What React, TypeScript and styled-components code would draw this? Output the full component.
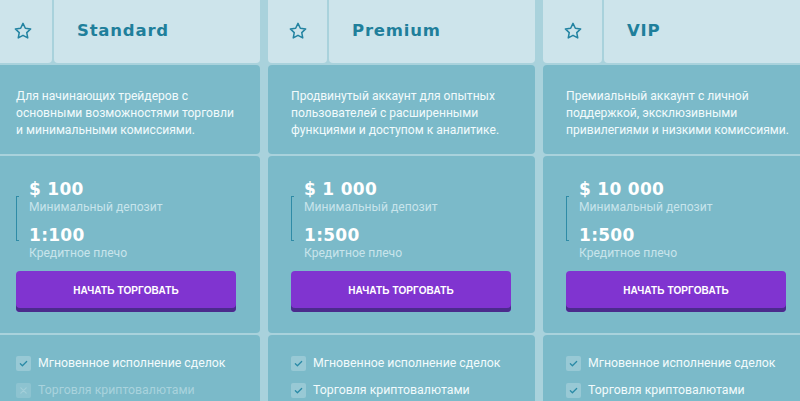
import React from "react";
import styled, { createGlobalStyle } from "styled-components";

const Global = createGlobalStyle`
  html, body { margin: 0; padding: 0; background: #a9d2dc; overflow: hidden; }
  body { font-family: "Roboto", "Liberation Sans", sans-serif; }
`;

const Row = styled.div`
  display: flex;
  align-items: flex-start;
  gap: 8px;
  margin-left: -7px;
  width: 830px;
  height: 401px;
  overflow: hidden;
`;

const Card = styled.div`
  flex: 0 0 267px;
  width: 267px;
  min-width: 0;
  display: flex;
  flex-direction: column;
  gap: 2px;
`;

const Header = styled.div`
  display: flex;
  gap: 2px;
  height: 66px;
  flex: 0 0 66px;
  margin-top: -3px;
`;

const HeadCell = styled.div<{ $grow?: boolean }>`
  background: #cde4eb;
  border-radius: 0 0 4px 4px;
  display: flex;
  align-items: center;
  ${(p) => (p.$grow ? "flex: 1; padding-left: 23px;" : "flex: 0 0 59px; justify-content: center;")}
  padding-top: 1px;
  box-sizing: border-box;
`;

const Title = styled.div`
  font-family: "DejaVu Sans", sans-serif;
  font-weight: 600;
  font-size: 16.5px;
  letter-spacing: 0.8px;
  color: #1f7f9b;
`;

const Section = styled.div<{ $h: number }>`
  background: #7bbac9;
  border-radius: 4px;
  height: ${(p) => p.$h}px;
  flex: 0 0 ${(p) => p.$h}px;
  box-sizing: border-box;
  padding: 0 23px;
`;

const Desc = styled.p`
  margin: 0;
  padding-top: 23px;
  font-size: 12.1px;
  line-height: 17px;
  color: #f2fafc;
  white-space: nowrap;
`;

const PriceBlock = styled.div`
  position: relative;
  margin-top: 23px;
  padding-left: 13px;
  &::before {
    content: "";
    position: absolute;
    left: 0;
    top: 17px;
    width: 3px;
    height: 45px;
    border: 1.5px solid #2f8ba6;
    border-right: none;
    box-sizing: border-box;
  }
`;

const Value = styled.div`
  font-family: "DejaVu Sans", sans-serif;
  font-weight: 700;
  font-size: 17px;
  line-height: 20px;
  color: #ffffff;
  letter-spacing: 0.3px;
`;

const Label = styled.div`
  font-size: 12.1px;
  line-height: 16px;
  color: #c8e4eb;
  margin-bottom: 10px;
  white-space: nowrap;
`;

const Button = styled.button`
  display: block;
  width: 220px;
  height: 41px;
  margin-top: 0;
  border: none;
  border-radius: 4px;
  background: #8034d0;
  box-shadow: inset 0 -4px 0 #4b2b8c;
  padding-bottom: 3px;
  color: #ffffff;
  font-family: "Liberation Sans", sans-serif;
  font-weight: 700;
  font-size: 10px;
  letter-spacing: 0.1px;
  cursor: pointer;
`;

const Features = styled.ul`
  list-style: none;
  margin: 0;
  padding: 20px 0 0;
  display: flex;
  flex-direction: column;
  gap: 11px;
`;

const Feature = styled.li<{ $off?: boolean }>`
  display: flex;
  align-items: center;
  gap: 7px;
  font-size: 12.3px;
  line-height: 16px;
  white-space: nowrap;
  color: ${(p) => (p.$off ? "#a9d3dd" : "#f2fafc")};
`;

const Box = styled.span<{ $off?: boolean }>`
  width: 15px;
  height: 15px;
  flex: 0 0 15px;
  display: flex;
  align-items: center;
  justify-content: center;
  background: ${(p) => (p.$off ? "rgba(255,255,255,0.14)" : "rgba(255,255,255,0.22)")};
  border-radius: 2px;
`;

const Star = () => (
  <svg width="20" height="20" viewBox="0 0 24 24" fill="none" stroke="#2383a1" strokeWidth="1.8" strokeLinejoin="round">
    <path d="M12 2.8l2.8 5.9 6.4.8-4.7 4.4 1.2 6.4L12 17.2l-5.7 3.1 1.2-6.4-4.7-4.4 6.4-.8z" />
  </svg>
);

const Check = () => (
  <svg width="9" height="9" viewBox="0 0 10 10" fill="none" stroke="#2a8aa6" strokeWidth="1.4" strokeLinecap="round" strokeLinejoin="round">
    <path d="M1.5 5.3l2.3 2.2L8.5 2.8" />
  </svg>
);

const Cross = () => (
  <svg width="9" height="9" viewBox="0 0 10 10" fill="none" stroke="#a3cfd9" strokeWidth="1.3" strokeLinecap="round">
    <path d="M2 2l6 6M8 2L2 8" />
  </svg>
);

type Plan = {
  name: string;
  desc: string[];
  deposit: string;
  leverage: string;
  crypto: boolean;
};

const plans: Plan[] = [
  {
    name: "Standard",
    desc: ["Для начинающих трейдеров с", "основными возможностями торговли", "и минимальными комиссиями."],
    deposit: "$ 100",
    leverage: "1:100",
    crypto: false,
  },
  {
    name: "Premium",
    desc: ["Продвинутый аккаунт для опытных", "пользователей с расширенными", "функциями и доступом к аналитике."],
    deposit: "$ 1 000",
    leverage: "1:500",
    crypto: true,
  },
  {
    name: "VIP",
    desc: ["Премиальный аккаунт с личной", "поддержкой, эксклюзивными", "привилегиями и низкими комиссиями."],
    deposit: "$ 10 000",
    leverage: "1:500",
    crypto: true,
  },
];

export default function App() {
  return (
    <>
      <Global />
      <Row>
        {plans.map((p) => (
          <Card key={p.name}>
            <Header>
              <HeadCell>
                <Star />
              </HeadCell>
              <HeadCell $grow>
                <Title>{p.name}</Title>
              </HeadCell>
            </Header>
            <Section $h={89}>
              <Desc>
                {p.desc.map((l, i) => (
                  <React.Fragment key={i}>
                    {l}
                    {i < p.desc.length - 1 && <br />}
                  </React.Fragment>
                ))}
              </Desc>
            </Section>
            <Section $h={177}>
              <PriceBlock>
                <Value>{p.deposit}</Value>
                <Label>Минимальный депозит</Label>
                <Value>{p.leverage}</Value>
                <Label>Кредитное плечо</Label>
              </PriceBlock>
              <Button>НАЧАТЬ ТОРГОВАТЬ</Button>
            </Section>
            <Section $h={80}>
              <Features>
                <Feature>
                  <Box>
                    <Check />
                  </Box>
                  Мгновенное исполнение сделок
                </Feature>
                <Feature $off={!p.crypto}>
                  <Box $off={!p.crypto}>{p.crypto ? <Check /> : <Cross />}</Box>
                  Торговля криптовалютами
                </Feature>
              </Features>
            </Section>
          </Card>
        ))}
      </Row>
    </>
  );
}
